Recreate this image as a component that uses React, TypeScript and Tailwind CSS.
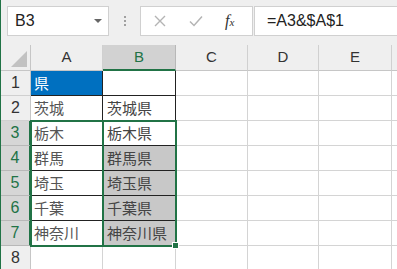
import React from "react";

const cols = [
  { k: "A", w: 72 },
  { k: "B", w: 73 },
  { k: "C", w: 72 },
  { k: "D", w: 71 },
  { k: "E", w: 73 },
];

const aVals = ["県", "茨城", "栃木", "群馬", "埼玉", "千葉", "神奈川"];
const bVals = ["", "茨城県", "栃木県", "群馬県", "埼玉県", "千葉県", "神奈川県"];

const jp = { fontFamily: '"Noto Sans CJK JP", "Noto Sans", sans-serif' };
const lat = { fontFamily: '"Liberation Sans", Arial, sans-serif' };

export default function App() {
  const rows = [1, 2, 3, 4, 5, 6, 7, 8];
  return (
    <div className="w-[397px] h-[269px] overflow-hidden bg-white border-l border-[#217346] relative" style={lat}>
      {/* formula bar */}
      <div className="h-[45px] bg-[#efefef] flex items-start pt-[6px] pl-[6px]">
        <div className="w-[102px] h-[30px] bg-white border border-[#d0d0d0] flex items-center justify-between pl-[7px] pr-[6px]">
          <span className="text-[16px] text-[#222]">B3</span>
          <svg width="8" height="5" viewBox="0 0 8 5"><path d="M0 0h8L4 4z" fill="#666" /></svg>
        </div>
        <div className="w-[31px] h-[30px] flex flex-col items-center justify-center gap-[2px]">
          <div className="w-[2px] h-[2px] bg-[#a0a0a0]" />
          <div className="w-[2px] h-[2px] bg-[#a0a0a0]" />
          <div className="w-[2px] h-[2px] bg-[#a0a0a0]" />
        </div>
        <div className="w-[113px] h-[30px] bg-white border border-[#d0d0d0] flex items-center">
          <svg className="ml-[13px]" width="12" height="12" viewBox="0 0 12 12"><path d="M1 1L11 11M11 1L1 11" stroke="#b4b4b4" strokeWidth="1.4" /></svg>
          <svg className="ml-[23px]" width="14" height="12" viewBox="0 0 14 12"><path d="M1 6.5L5 10.5L13 1.5" stroke="#b4b4b4" strokeWidth="1.5" fill="none" /></svg>
          <span className="ml-[22px] text-[16px] italic text-[#333]" style={{ fontFamily: '"Liberation Serif", serif' }}>f<span className="text-[11px]">x</span></span>
        </div>
        <div className="ml-[1px] flex-1 h-[30px] bg-white border border-[#d0d0d0] border-r-0 flex items-center pl-[12px]">
          <span className="text-[16px] text-[#222]">=A3&amp;$A$1</span>
        </div>
      </div>

      {/* grid */}
      <div className="relative">
        <div className="grid grid-cols-[30px_72px_73px_72px_71px_73px_20px] grid-rows-[26px_repeat(8,25px)]">
          {/* header row */}
          <div className="bg-[#efefef] border-r border-b border-[#c6c6c6] flex items-end justify-end p-[3px]">
            <svg width="16" height="16" viewBox="0 0 16 16"><path d="M16 0V16H0z" fill="#c2c2c2" /></svg>
          </div>
          {cols.map((c) => (
            <div
              key={c.k}
              className={
                c.k === "B"
                  ? "bg-[#d2d2d2] border-r border-[#b8b8b8] border-b-2 border-b-[#217346] flex items-center justify-center text-[15px] text-[#217346]"
                  : "bg-[#efefef] border-r border-b border-[#d0d0d0] border-b-[#c6c6c6] flex items-center justify-center text-[15px] text-[#333]"
              }
            >
              {c.k}
            </div>
          ))}
          <div className="bg-[#efefef] border-b border-[#c6c6c6]" />

          {rows.map((r) => {
            const sel = r >= 3 && r <= 7;
            const inTable = r <= 7;
            return (
              <React.Fragment key={r}>
                <div
                  className={
                    sel
                      ? "bg-[#d6d6d6] border-r-2 border-r-[#217346] border-b border-[#b8b8b8] flex items-center justify-center text-[16px] text-[#217346]"
                      : "bg-[#efefef] border-r border-[#c6c6c6] border-b border-b-[#d0d0d0] flex items-center justify-center text-[16px] text-[#333]"
                  }
                >
                  {r}
                </div>
                {/* A */}
                <div
                  className={
                    (r === 1
                      ? "bg-[#0070c0] text-white "
                      : "bg-white text-[#555] ") +
                    (inTable ? "border-r border-b border-[#222] " : "border-r border-b border-[#d4d4d4] ") +
                    "flex items-center pl-[3px] pt-[1px] text-[15px]"
                  }
                  style={jp}
                >
                  {inTable ? aVals[r - 1] : ""}
                </div>
                {/* B */}
                <div
                  className={
                    (r >= 4 && r <= 7 ? "bg-[#c8c8c8] " : "bg-white ") +
                    (inTable ? "border-r border-b border-[#222] " : "border-r border-b border-[#d4d4d4] ") +
                    "flex items-center pl-[4px] pt-[1px] text-[15px] text-[#444]"
                  }
                  style={jp}
                >
                  {inTable ? bVals[r - 1] : ""}
                </div>
                <div className="border-r border-b border-[#d4d4d4]" />
                <div className="border-r border-b border-[#d4d4d4]" />
                <div className="border-r border-b border-[#d4d4d4]" />
                <div className="border-b border-[#d4d4d4]" />
              </React.Fragment>
            );
          })}
        </div>

        {/* selection outlines (overlays) */}
        <div className="absolute left-[29px] top-[75px] w-[74px] h-[127px] border-2 border-[#217346] pointer-events-none" />
        <div className="absolute left-[101px] top-[75px] w-[75px] h-[127px] border-2 border-[#217346] pointer-events-none" />
        <div className="absolute left-[171px] top-[197px] w-[7px] h-[7px] bg-[#217346] border border-white pointer-events-none" />
      </div>
    </div>
  );
}
